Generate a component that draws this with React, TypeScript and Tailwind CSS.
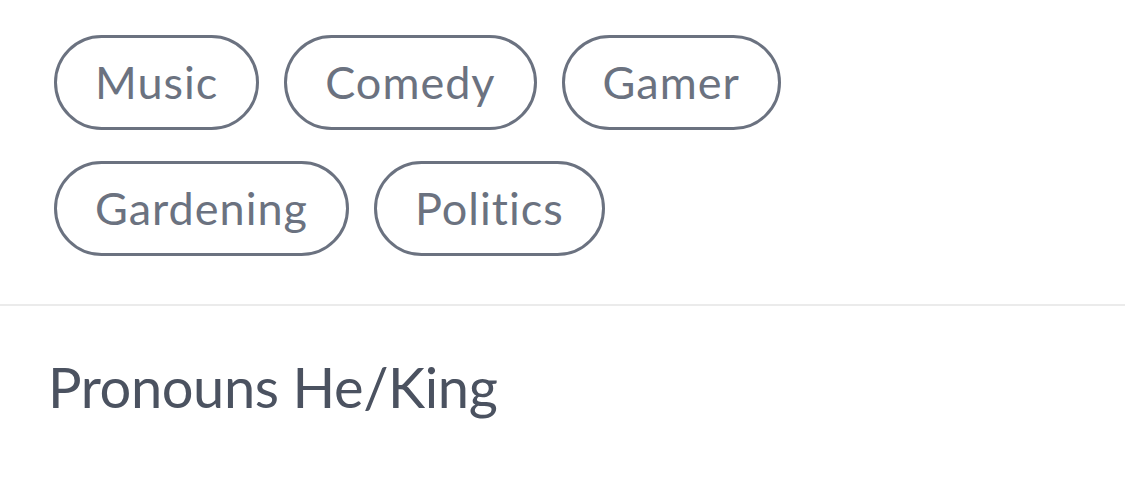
import React from "react";

const interests = [
  ["Music", "Comedy", "Gamer"],
  ["Gardening", "Politics"],
];

const Chip = ({ label }: { label: string }) => (
  <div className="flex h-[95px] items-center rounded-full border-[3px] border-[#6b7280] px-[38px] text-[45px] leading-none tracking-[1px] text-[#6b7280]">
    {label}
  </div>
);

export default function App() {
  return (
    <div className="h-[479px] w-[1125px] overflow-hidden bg-white font-['Lato',sans-serif]">
      {/* Interest chips */}
      <div className="flex flex-col gap-[31px] pl-[54px] pt-[35px]">
        {interests.map((row, i) => (
          <div key={i} className="flex gap-[25px]">
            {row.map(label => (
              <Chip key={label} label={label} />
            ))}
          </div>
        ))}
      </div>

      <div className="mt-[48px] h-[2px] w-full bg-[#ebebeb]" />

      {/* Pronouns */}
      <p className="pl-[48px] pt-[53px] text-[56px] leading-none tracking-[-0.4px] text-[#4b5260]">
        Pronouns He/King
      </p>
    </div>
  );
}
